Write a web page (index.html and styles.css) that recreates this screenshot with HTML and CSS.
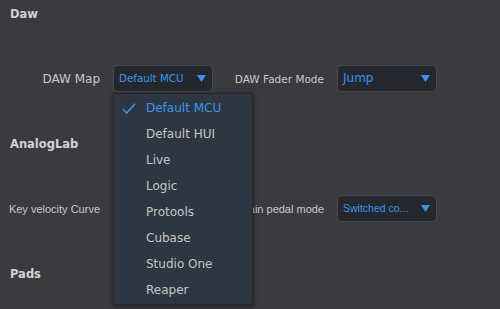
FILE: index.html
```html
<!DOCTYPE html>
<html>
<head>
<meta charset="utf-8">
<link rel="stylesheet" href="styles.css">
</head>
<body>
<div class="page">
  <section class="section">
    <h2 class="heading">Daw</h2>
    <div class="row">
      <span class="label label-wide">DAW Map</span>
      <div class="select select-open">
        <span class="value">Default MCU</span>
        <svg class="arrow" width="9" height="7" viewBox="0 0 9 7"><path d="M0 0H9L4.5 7Z" fill="#3a95ea"/></svg>
        <ul class="menu">
          <li class="item item-selected"><svg class="check" width="14" height="11" viewBox="0 0 14 11"><path d="M1 6.2L4.6 10L13 0.8" fill="none" stroke="#3a95ea" stroke-width="1.6"/></svg>Default MCU</li>
          <li class="item">Default HUI</li>
          <li class="item">Live</li>
          <li class="item">Logic</li>
          <li class="item">Protools</li>
          <li class="item">Cubase</li>
          <li class="item">Studio One</li>
          <li class="item">Reaper</li>
        </ul>
      </div>
      <span class="label label-second">DAW Fader Mode</span>
      <div class="select">
        <span class="value value-big">Jump</span>
        <svg class="arrow" width="9" height="7" viewBox="0 0 9 7"><path d="M0 0H9L4.5 7Z" fill="#3a95ea"/></svg>
      </div>
    </div>
  </section>
  <section class="section">
    <h2 class="heading">AnalogLab</h2>
    <div class="row">
      <span class="label label-narrow">Key velocity Curve</span>
      <div class="select">
        <span class="value"></span>
        <svg class="arrow" width="9" height="7" viewBox="0 0 9 7"><path d="M0 0H9L4.5 7Z" fill="#3a95ea"/></svg>
      </div>
      <span class="label label-second label-narrow">Sustain pedal mode</span>
      <div class="select">
        <span class="value value-narrow">Switched co...</span>
        <svg class="arrow" width="9" height="7" viewBox="0 0 9 7"><path d="M0 0H9L4.5 7Z" fill="#3a95ea"/></svg>
      </div>
    </div>
  </section>
  <section class="section">
    <h2 class="heading">Pads</h2>
  </section>
</div>
</body>
</html>
```

FILE: styles.css
```css
html, body {
  margin: 0;
  padding: 0;
  background: #3b3b3f;
  overflow: hidden;
}
.page {
  width: 500px;
  height: 309px;
  padding: 7px 0 0 10px;
  box-sizing: border-box;
  font-family: "DejaVu Sans", sans-serif;
  color: #c9c9c9;
}
.section {
  margin: 0;
}
.heading {
  margin: 0;
  font-size: 11.5px;
  line-height: 15px;
  font-weight: bold;
  color: #d2d2d2;
  height: 15px;
}
.row {
  display: flex;
  align-items: center;
  margin: 43px 0 45px 0;
  height: 27px;
}
.label {
  width: 90px;
  text-align: right;
  font-size: 12px;
  white-space: nowrap;
  margin-right: 13px;
  display: flex;
  justify-content: flex-end;
}
.label-second {
  width: 111px;
  font-size: 10.5px;
}
.label-narrow {
  font-family: "Liberation Sans", sans-serif;
  font-size: 11px;
}
.select {
  position: relative;
  width: 100px;
  height: 27px;
  box-sizing: border-box;
  background: #24282e;
  border: 1px solid #47494d;
  border-radius: 5px;
  display: flex;
  align-items: center;
  justify-content: space-between;
  padding: 0 6px 1px 5px;
  color: #3a95ea;
}
.value {
  font-size: 10.3px;
  white-space: nowrap;
}
.value-big {
  font-size: 12px;
}
.value-narrow {
  font-family: "Liberation Sans", sans-serif;
  font-size: 10.5px;
}
.arrow {
  display: block;
  flex: none;
}
.menu {
  position: absolute;
  left: -1px;
  top: 27px;
  z-index: 10;
  width: 138px;
  margin: 0;
  padding: 1px 0;
  list-style: none;
  background: #2d3641;
  box-shadow: 0 1px 5px rgba(0, 0, 0, 0.55);
  border: 1px solid #25292f;
}
.item {
  position: relative;
  height: 26px;
  line-height: 26px;
  padding-left: 32px;
  font-size: 12px;
  color: #c6c6c6;
  white-space: nowrap;
}
.item-selected {
  color: #3a95ea;
}
.check {
  position: absolute;
  left: 8px;
  top: 8px;
}
```
